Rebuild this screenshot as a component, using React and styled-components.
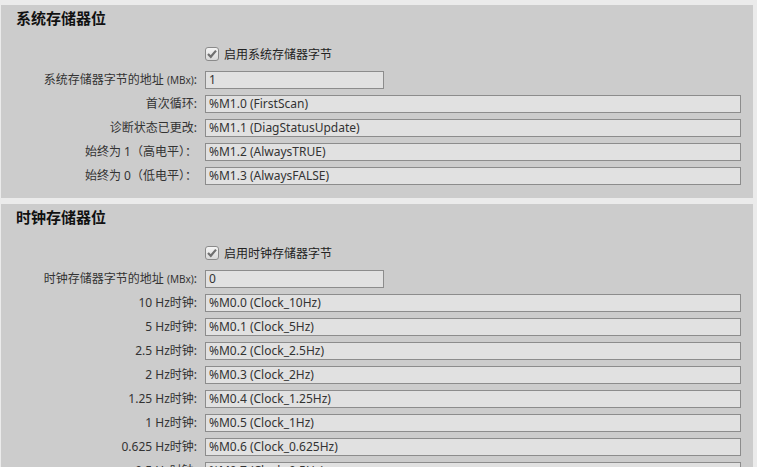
import styled, { createGlobalStyle } from "styled-components";

const GlobalStyle = createGlobalStyle`
  html, body {
    margin: 0;
    padding: 0;
    background: #ebebeb;
  }
  body {
    font-family: "Noto Sans", "Noto Sans CJK SC", sans-serif;
    color: #333;
  }
`;

const systemRows = [
  { label: "首次循环:", value: "%M1.0 (FirstScan)" },
  { label: "诊断状态已更改:", value: "%M1.1 (DiagStatusUpdate)" },
  { label: "始终为 1（高电平）：", value: "%M1.2 (AlwaysTRUE)" },
  { label: "始终为 0（低电平）：", value: "%M1.3 (AlwaysFALSE)" },
];

const clockRows = [
  { label: "10 Hz时钟:", value: "%M0.0 (Clock_10Hz)" },
  { label: "5 Hz时钟:", value: "%M0.1 (Clock_5Hz)" },
  { label: "2.5 Hz时钟:", value: "%M0.2 (Clock_2.5Hz)" },
  { label: "2 Hz时钟:", value: "%M0.3 (Clock_2Hz)" },
  { label: "1.25 Hz时钟:", value: "%M0.4 (Clock_1.25Hz)" },
  { label: "1 Hz时钟:", value: "%M0.5 (Clock_1Hz)" },
  { label: "0.625 Hz时钟:", value: "%M0.6 (Clock_0.625Hz)" },
  { label: "0.5 Hz时钟:", value: "%M0.7 (Clock_0.5Hz)" },
];

const CheckIcon = () => (
  <svg width="14" height="14" viewBox="0 0 14 14">
    <defs>
      <linearGradient id="cbg" x1="0" y1="0" x2="0" y2="1">
        <stop offset="0" stopColor="#f6f6f6" />
        <stop offset="1" stopColor="#d8d8d8" />
      </linearGradient>
    </defs>
    <rect x="0.5" y="0.5" width="13" height="13" rx="2.5" fill="url(#cbg)" stroke="#8a8a8a" />
    <path d="M3 7 L5.8 9.8 L11 3.6" fill="none" stroke="#707070" strokeWidth="2.2" />
  </svg>
);

const Section = ({ title, enableLabel, address, value, rows }) => (
  <Panel>
    <Title>{title}</Title>
    <Form>
      <Spacer />
      <CheckRow>
        <CheckIcon />
        <span>{enableLabel}</span>
      </CheckRow>
      <Label>
        {address} <Small>(MBx)</Small>:
      </Label>
      <Field $short>{value}</Field>
      {rows.map((r) => (
        <Row key={r.value} label={r.label} value={r.value} />
      ))}
    </Form>
  </Panel>
);

const Row = ({ label, value }) => (
  <>
    <Label>{label}</Label>
    <Field>{value}</Field>
  </>
);

export default function App() {
  return (
    <Page>
      <GlobalStyle />
      <Section
        title="系统存储器位"
        enableLabel="启用系统存储器字节"
        address="系统存储器字节的地址"
        value="1"
        rows={systemRows}
      />
      <Section
        title="时钟存储器位"
        enableLabel="启用时钟存储器字节"
        address="时钟存储器字节的地址"
        value="0"
        rows={clockRows}
      />
    </Page>
  );
}

const Page = styled.div`
  display: flex;
  flex-direction: column;
  gap: 6px;
  padding: 5px 4px 0 1px;
`;

const Panel = styled.section`
  background: #cccccc;
  padding: 0 12px 13px 0;
`;

const Title = styled.h2`
  margin: 0;
  padding-left: 15px;
  font-size: 15px;
  font-weight: bold;
  line-height: 26px;
  color: #111;
`;

const Form = styled.div`
  display: grid;
  grid-template-columns: 196px 1fr;
  column-gap: 8px;
  row-gap: 6px;
  margin-top: 14px;
  font-size: 12px;
`;

const Spacer = styled.div``;

const CheckRow = styled.div`
  display: flex;
  align-items: center;
  gap: 5px;
  height: 18px;
  margin-bottom: 2px;
  color: #222;

  svg {
    flex: none;
  }
`;

const Label = styled.div`
  height: 18px;
  line-height: 18px;
  text-align: right;
  white-space: nowrap;
  color: #333;
`;

const Small = styled.span`
  font-size: 10px;
`;

const Field = styled.div`
  box-sizing: border-box;
  height: 18px;
  width: ${(p) => (p.$short ? "179px" : "auto")};
  line-height: 16px;
  padding-left: 3px;
  background: #e1e1e1;
  border: 1px solid #8c8c8c;
  color: #333;
  white-space: nowrap;
  overflow: hidden;
`;
